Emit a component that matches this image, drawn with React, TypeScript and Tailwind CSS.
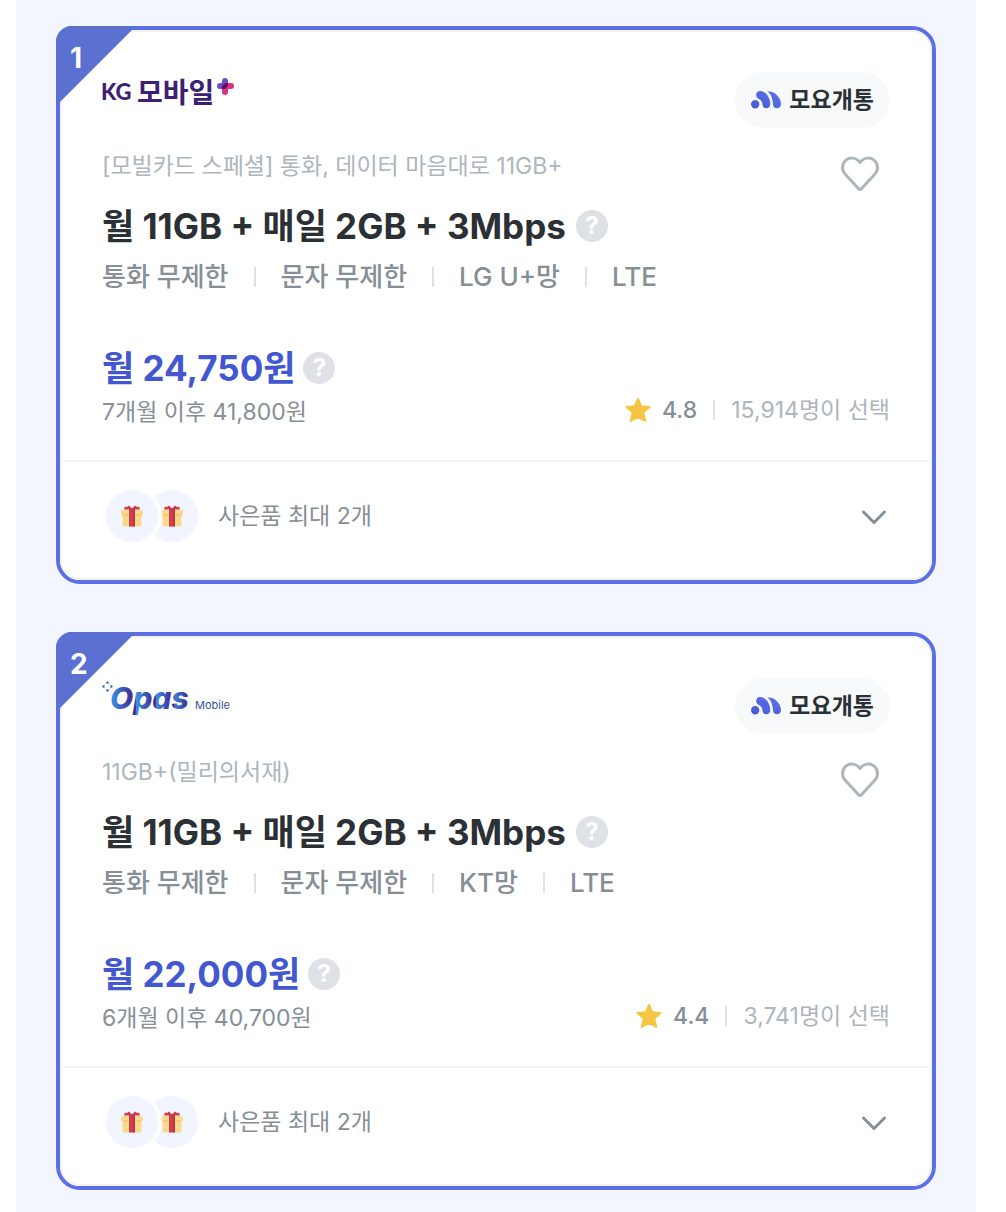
import { useState } from "react";

type Plan = {
  rank: number;
  brand: "kg" | "opas";
  name: string;
  data: string;
  specs: string[];
  price: string;
  after: string;
  rating: string;
  selected: string;
};

const plans: Plan[] = [
  {
    rank: 1,
    brand: "kg",
    name: "[모빌카드 스페셜] 통화, 데이터 마음대로 11GB+",
    data: "월 11GB + 매일 2GB + 3Mbps",
    specs: ["통화 무제한", "문자 무제한", "LG U+망", "LTE"],
    price: "월 24,750원",
    after: "7개월 이후 41,800원",
    rating: "4.8",
    selected: "15,914명이 선택",
  },
  {
    rank: 2,
    brand: "opas",
    name: "11GB+(밀리의서재)",
    data: "월 11GB + 매일 2GB + 3Mbps",
    specs: ["통화 무제한", "문자 무제한", "KT망", "LTE"],
    price: "월 22,000원",
    after: "6개월 이후 40,700원",
    rating: "4.4",
    selected: "3,741명이 선택",
  },
];

function KgLogo() {
  return (
    <svg width="136" height="40" viewBox="0 0 136 40" overflow="visible" role="img" aria-label="KG 모바일">
      <text x="-1" y="28" className="fill-[#3d1f75] font-['Lato'] text-[22px] font-black">KG</text>
      <text x="35" y="31" className="fill-[#3d1f75] font-['Noto_Sans_CJK_KR'] text-[28px] font-bold">모바일</text>
      <rect x="120" y="6" width="6" height="11" rx="3" fill="#6f4fc6" />
      <rect x="115" y="11" width="11" height="6" rx="3" fill="#6f4fc6" />
      <rect x="120" y="12" width="6" height="11" rx="3" fill="#e0317f" />
      <rect x="121" y="11" width="11" height="6" rx="3" fill="#e0317f" />
      <path d="M120 17v-3l3-3h3v3l-3 3z" fill="#5b1168" />
    </svg>
  );
}

function OpasLogo() {
  return (
    <svg width="136" height="40" viewBox="0 0 136 40" role="img" aria-label="Opas Mobile">
      <defs>
        {/* each letter runs from light blue to purple */}
        <linearGradient id="opas" gradientUnits="userSpaceOnUse" x1="9" y1="0" x2="89" y2="0">
          <stop offset="0" stopColor="#3b93ea" />
          <stop offset="0.3" stopColor="#3f1f80" />
          <stop offset="0.32" stopColor="#3b93ea" />
          <stop offset="0.55" stopColor="#3f1f80" />
          <stop offset="0.57" stopColor="#3b8ee6" />
          <stop offset="0.78" stopColor="#3f1f80" />
          <stop offset="0.8" stopColor="#3b7ed6" />
          <stop offset="1" stopColor="#3f1f80" />
        </linearGradient>
      </defs>
      <path d="M5.500 3l2 2.500h-4zM5.500 14l2-2.500h-4zM0 8.500l2.500-2v4zM11 8.500l-2.500-2v4z" fill="#2f62b5" />
      <text x="8" y="31" fill="url(#opas)" className="font-['Inter'] text-[30px] font-extrabold italic">Opas</text>
      <text x="93" y="31" fill="#3a4f9f" className="font-['Inter'] text-[11px]">Mobile</text>
    </svg>
  );
}

function MoyoIcon() {
  return (
    <svg width="32" height="20" viewBox="0 0 32 20" aria-hidden="true">
      <defs>
        <linearGradient id="moyo" x1="0" y1="1" x2="1" y2="0">
          <stop offset="0" stopColor="#4558cf" />
          <stop offset="1" stopColor="#5f75ee" />
        </linearGradient>
      </defs>
      <path
        fill="url(#moyo)"
        d="M4.200 10a4.200 4.200 0 1 1 0 8.400a4.200 4.200 0 0 1 0-8.400zM9 1C14.500 1 19.300 7 19.300 14.200C19.300 19.500 11.800 19.800 11.500 14.500C11.300 11.500 10 10.200 7.500 8.800C3.500 6.500 5 1 9 1zM16.500 1.500C23 .5 30 7 30 14.200C30 19.500 22.500 19.800 22 14.500C21.600 9 20.500 4.500 16.500 1.500z"
      />
    </svg>
  );
}

function GiftIcon() {
  return (
    <svg width="22" height="22" viewBox="0 0 22 22" aria-hidden="true">
      <rect x="1.500" y="8" width="19" height="13.500" rx="2" fill="#f9d98c" />
      <rect x="0" y="5" width="22" height="5" rx="2" fill="#f9d98c" />
      <path d="M1.500 9.500h19v1h-19z" fill="#f3bb55" />
      <path d="M3 4.500L4 1.500l2 .5 2-1.500 3 3 3-3L16 2l2-.5 1 3z" fill="#cf3e4f" />
      <rect x="8" y="3" width="6" height="18.500" fill="#cf3e4f" />
      <rect x="12.500" y="3" width="1.500" height="18.500" fill="#b93345" />
    </svg>
  );
}

function HelpButton({ label }: { label: string }) {
  return (
    <button
      type="button"
      aria-label={label}
      className="flex size-8 shrink-0 items-center justify-center rounded-full bg-[#dee2e6] text-2xl font-bold text-white"
    >
      ?
    </button>
  );
}

function PlanCard({ plan }: { plan: Plan }) {
  const [liked, setLiked] = useState(false);
  const [open, setOpen] = useState(false);

  return (
    <article className="relative rounded-3xl rounded-tl-2xl border-4 border-[#5c6fe6] bg-white">
      <div className="absolute -top-1 -left-1 h-20 w-20 rounded-tl-2xl bg-[#5c70d2] [clip-path:polygon(0_0,100%_0,0_100%)]">
        <span className="absolute top-4 left-3.5 text-[28px] leading-8 font-bold text-white">{plan.rank}</span>
      </div>
      <div className="rounded-[20px] rounded-tl-xl border-2 border-[#f1f3f5]">
        <div className="px-10 pt-10 pb-[30px]">
          <div className="flex items-start justify-between">
            {plan.brand === "kg" ? <KgLogo /> : <OpasLogo />}
            <span className="flex h-14 items-center gap-1.5 rounded-full bg-[#f8f9fa] px-4 text-[23px] font-bold text-[#2b3035]">
              <MoyoIcon />
              모요개통
            </span>
          </div>

          <div className="mt-5 flex justify-between">
            <p className="text-[23px] leading-9 text-[#adb5bd]">{plan.name}</p>
            <button type="button" aria-label="찜하기" aria-pressed={liked} onClick={() => setLiked(!liked)} className="mr-2.5 h-9 pt-2">
              <svg width="40" height="36" viewBox="0 0 40 36" aria-hidden="true">
                <path
                  d="M20 6.500C16 1 9 1 5.500 4.500C1.500 8.500 1.500 14.500 5.500 18.500L18.300 32.500Q20 34.500 21.700 32.500L34.500 18.500C38.500 14.500 38.500 8.500 34.500 4.500C31 1 24 1 20 6.500Z"
                  fill={liked ? "#adb5bd" : "none"}
                  stroke="#adb5bd"
                  strokeWidth="3"
                  strokeLinejoin="round"
                />
              </svg>
            </button>
          </div>

          <div className="mt-5 flex items-center gap-2.5">
            <h2 className="text-[35px] leading-11 font-bold text-[#2b3035]">{plan.data}</h2>
            <HelpButton label="데이터 안내" />
          </div>

          <ul className="mt-2 flex text-[26px] leading-[42px] font-medium text-[#868e96]">
            {plan.specs.map((spec, i) => (
              <li key={spec} className="flex items-center">
                {i > 0 && <span className="mx-[25px] h-5 w-0.5 bg-[#dee2e6]" />}
                {spec}
              </li>
            ))}
          </ul>

          <div className="mt-12 flex items-end justify-between">
            <div>
              <div className="flex items-center gap-2">
                <strong className="text-[35px] leading-11 font-bold text-[#4257d0]">{plan.price}</strong>
                <HelpButton label="요금 안내" />
              </div>
              <p className="mt-1 text-[23px] leading-9 text-[#868e96]">{plan.after}</p>
            </div>
            <div className="mb-0.5 flex items-center gap-4 text-[23px] leading-9 text-[#adb5bd]">
              <span className="flex items-center gap-2.5 font-medium text-[#868e96]">
                <svg width="28" height="28" viewBox="0 0 28 28" aria-hidden="true">
                  <path
                    d="M14 3l3.300 7.300 8.200.7-6.200 5.400 1.900 8.600L14 21l-7.200 4 1.900-8.600L2.500 11l8.200-.7z"
                    fill="#f5c543"
                    stroke="#f5c543"
                    strokeWidth="2"
                    strokeLinejoin="round"
                  />
                </svg>
                {plan.rating}
              </span>
              <span className="h-5 w-0.5 bg-[#dee2e6]" />
              <span>{plan.selected}</span>
            </div>
          </div>
        </div>

        <button
          type="button"
          aria-expanded={open}
          onClick={() => setOpen(!open)}
          className="flex w-full items-center border-t-2 border-[#f1f3f5] px-10 pt-6 pb-8 text-left text-[23px] text-[#868e96]"
        >
          <span className="z-10 flex size-15 items-center justify-center rounded-full border-4 border-white bg-[#f2f4ff]">
            <GiftIcon />
          </span>
          <span className="-ml-5 flex size-15 items-center justify-center rounded-full border-4 border-white bg-[#f2f4ff]">
            <GiftIcon />
          </span>
          <span className="ml-4 flex-1">사은품 최대 2개</span>
          <svg width="32" height="32" viewBox="0 0 32 32" aria-hidden="true" className={open ? "rotate-180" : ""}>
            <path d="M5.500 12l10.500 10.500L26.500 12" fill="none" stroke="#868e96" strokeWidth="3" strokeLinecap="round" strokeLinejoin="round" />
          </svg>
        </button>
      </div>
    </article>
  );
}

export default function App() {
  return (
    <div className="min-h-screen bg-white pr-[30px] pl-4 font-['Inter','Noto_Sans_CJK_KR',sans-serif]">
      <main className="flex min-h-screen flex-col gap-12 bg-[#f3f6ff] px-10 pt-[26px] pb-[22px]">
        {plans.map((plan) => (
          <PlanCard key={plan.rank} plan={plan} />
        ))}
      </main>
    </div>
  );
}
